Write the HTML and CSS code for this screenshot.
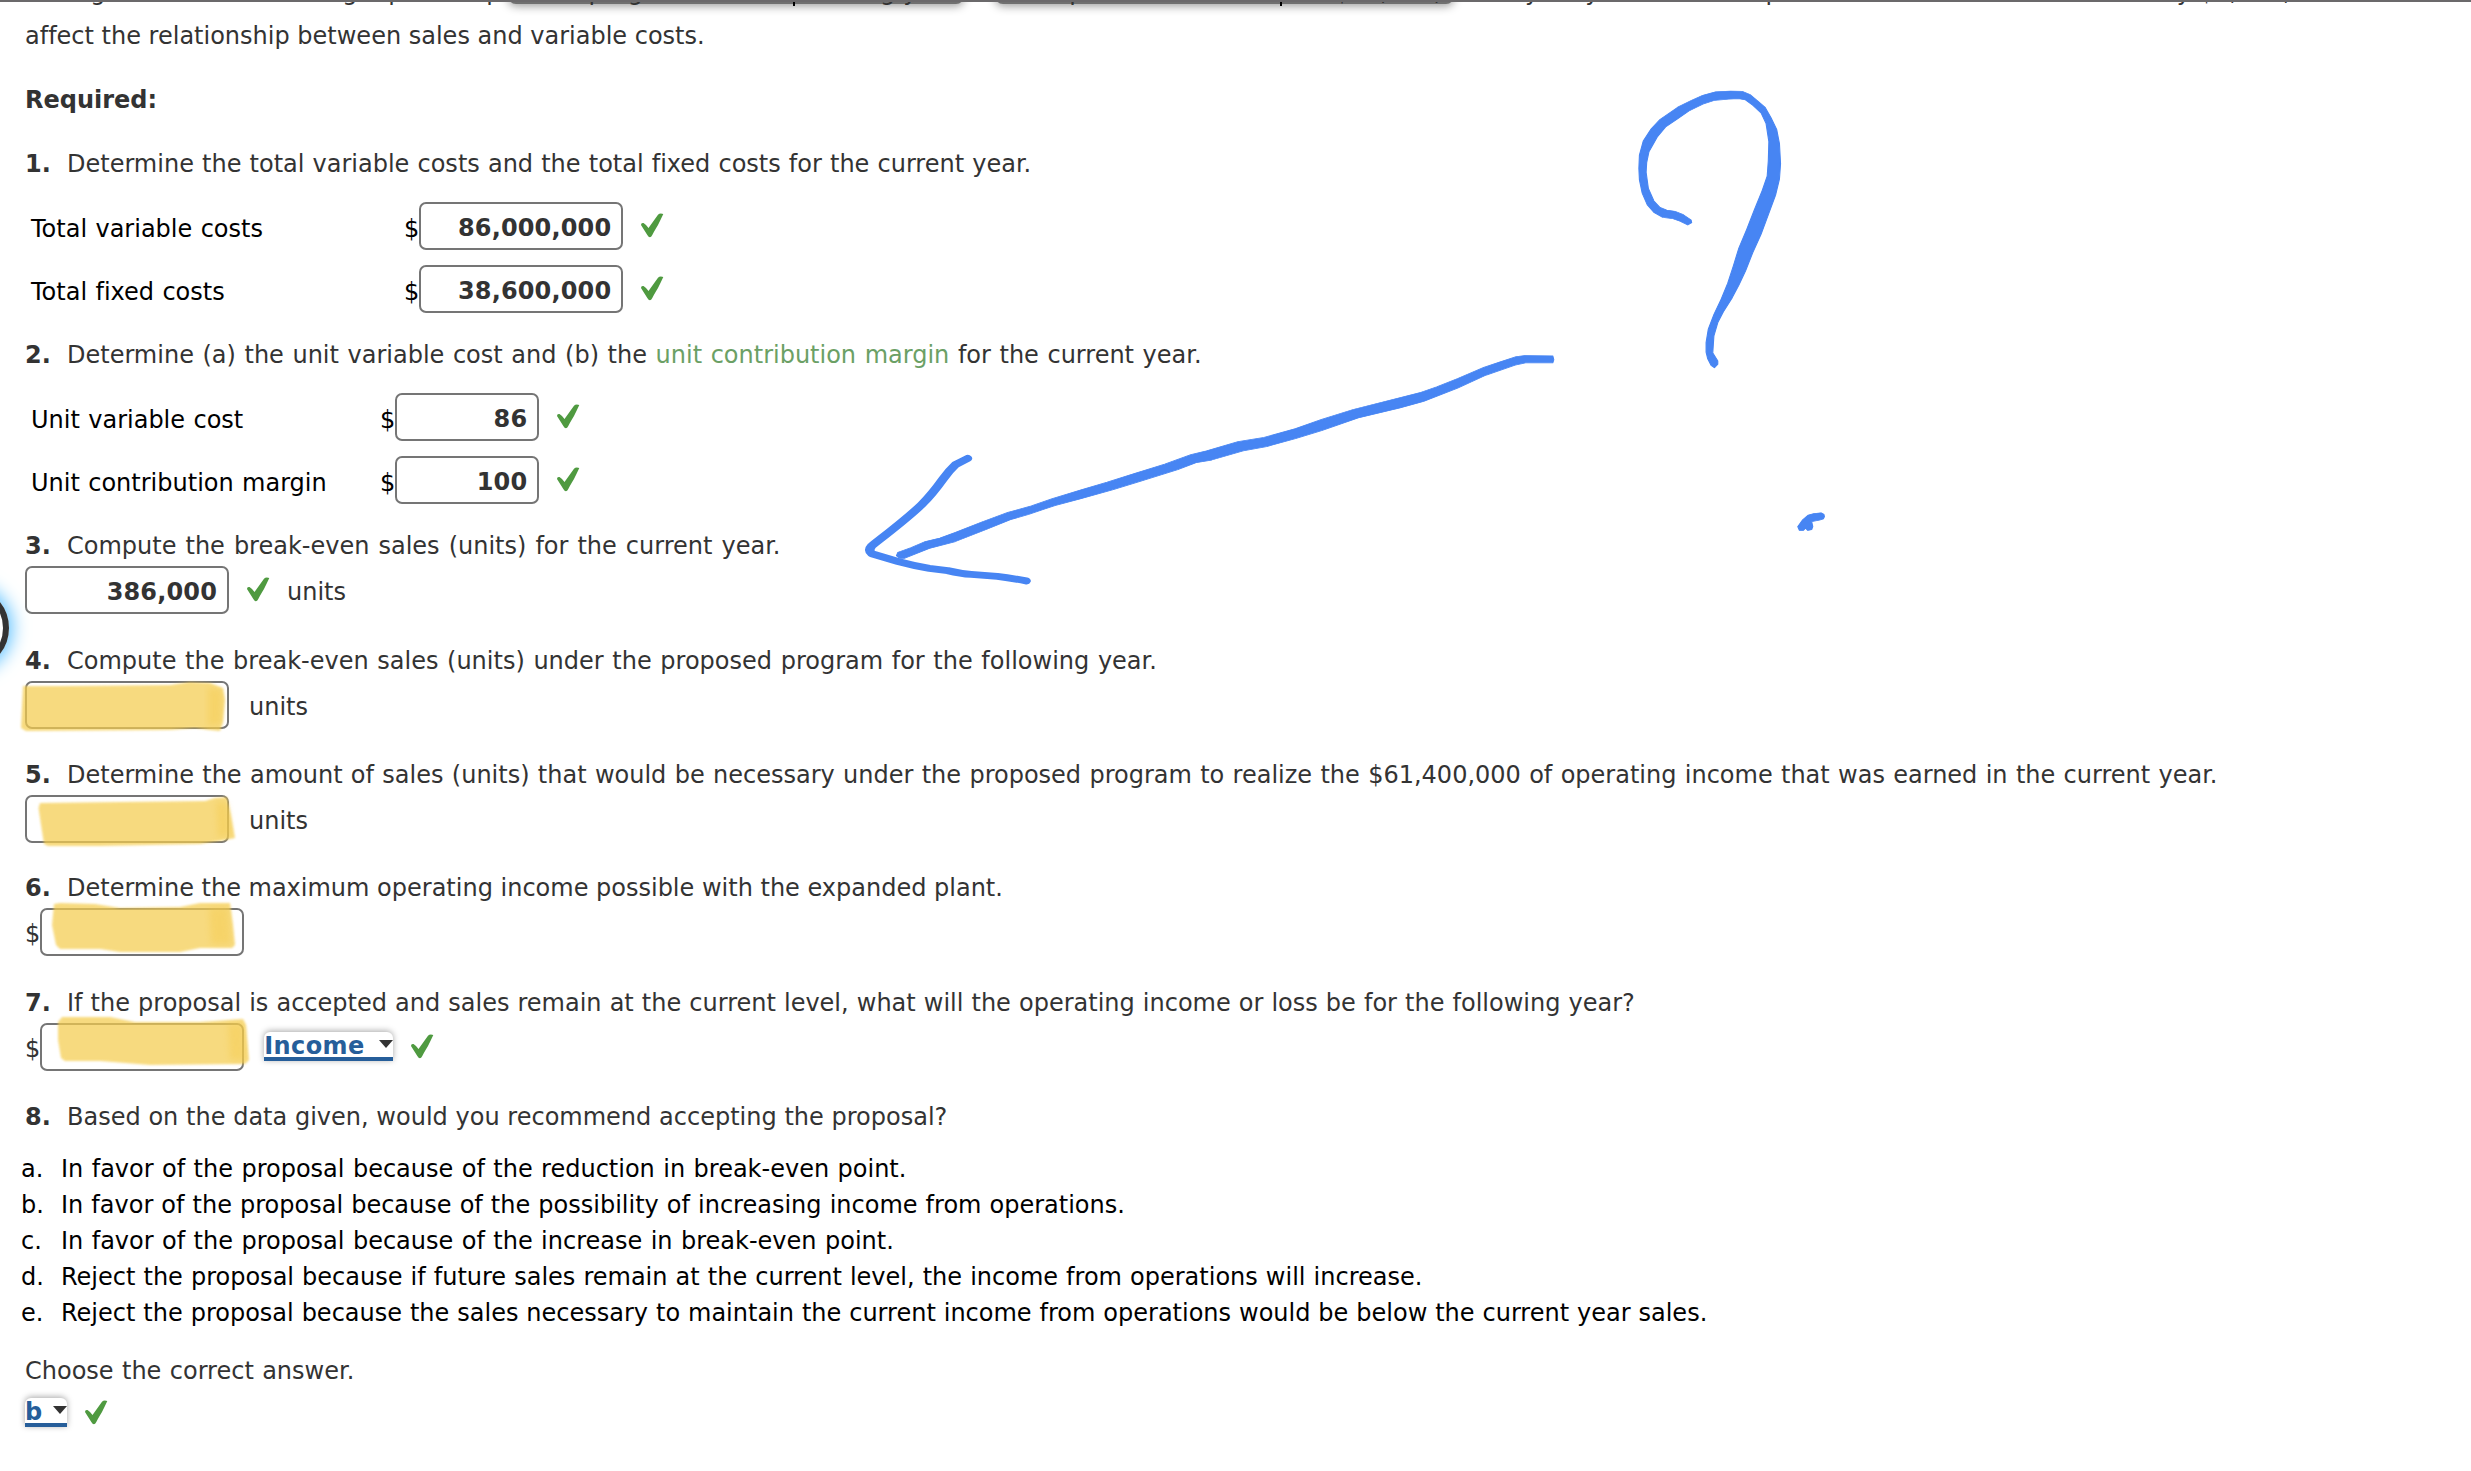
FILE: index.html
```html
<!DOCTYPE html>
<html lang="en">
<head>
  <meta charset="UTF-8">
  <title>Homework</title>
  <link rel="stylesheet" href="styles.css">
</head>
<body>
  <svg class="defs" width="0" height="0">
    <symbol id="check" viewBox="0 0 24 26">
      <path d="M1 12 Q1 9.500 3.500 10 Q6 11.300 8.500 15 L18 1.800 Q20 -0.500 23.300 1 Q20.500 7 18 12 Q14 18.500 12.300 22 Q10 26.500 7.300 22 Q4.500 17.500 1 12Z" fill="#4f9a40"/>
    </symbol>
  </svg>

  <!-- Toolbar edges along the top -->
  <div class="tab tab-left"></div>
  <div class="tab tab-right"></div>
  <div class="topline"></div>

  <main class="page">
    <p class="intro">Management is considering a plant expansion program for the following year that will permit an increase of $13,020,000 in yearly sales. The expansion will increase fixed costs by $5,000,000 but will not</p>
    <p class="intro-end">affect the relationship between sales and variable costs.</p>
    <p class="heading"><b>Required:</b></p>

    <p class="question first"><b>1.</b>Determine the total variable costs and the total fixed costs for the current year.</p>
    <div class="row wide"><span class="label">Total variable costs</span><span class="dollar">$</span><span class="box">86,000,000</span><svg class="check"><use href="#check"/></svg></div>
    <div class="row wide"><span class="label">Total fixed costs</span><span class="dollar">$</span><span class="box">38,600,000</span><svg class="check"><use href="#check"/></svg></div>

    <p class="question second"><b>2.</b>Determine (a) the unit variable cost and (b) the <a class="term">unit contribution margin</a> for the current year.</p>
    <div class="row"><span class="label">Unit variable cost</span><span class="dollar">$</span><span class="box small">86</span><svg class="check"><use href="#check"/></svg></div>
    <div class="row"><span class="label">Unit contribution margin</span><span class="dollar">$</span><span class="box small">100</span><svg class="check"><use href="#check"/></svg></div>

    <p class="question third"><b>3.</b>Compute the break-even sales (units) for the current year.</p>
    <div class="answer"><span class="box">386,000</span><svg class="check"><use href="#check"/></svg><span class="unit">units</span></div>

    <p class="question fourth"><b>4.</b>Compute the break-even sales (units) under the proposed program for the following year.</p>
    <div class="answer"><span class="box"></span><span class="unit">units</span></div>

    <p class="question fifth"><b>5.</b>Determine the amount of sales (units) that would be necessary under the proposed program to realize the $61,400,000 of operating income that was earned in the current year.</p>
    <div class="answer"><span class="box"></span><span class="unit">units</span></div>

    <p class="question sixth"><b>6.</b>Determine the maximum operating income possible with the expanded plant.</p>
    <div class="answer"><span class="dollar">$</span><span class="box"></span></div>

    <p class="question seventh"><b>7.</b>If the proposal is accepted and sales remain at the current level, what will the operating income or loss be for the following year?</p>
    <div class="answer"><span class="dollar">$</span><span class="box"></span><span class="select">Income<i class="arrow"></i></span><svg class="check"><use href="#check"/></svg></div>

    <p class="question eighth"><b>8.</b>Based on the data given, would you recommend accepting the proposal?</p>
    <ol class="choices">
      <li><span>a.</span>In favor of the proposal because of the reduction in break-even point.</li>
      <li><span>b.</span>In favor of the proposal because of the possibility of increasing income from operations.</li>
      <li><span>c.</span>In favor of the proposal because of the increase in break-even point.</li>
      <li><span>d.</span>Reject the proposal because if future sales remain at the current level, the income from operations will increase.</li>
      <li><span>e.</span>Reject the proposal because the sales necessary to maintain the current income from operations would be below the current year sales.</li>
    </ol>
    <p class="choose">Choose the correct answer.</p>
    <div class="final"><span class="select letter">b<i class="arrow"></i></span><svg class="check"><use href="#check"/></svg></div>
  </main>

  <div class="ring"></div>

  <!-- Highlighter and pen marks -->
  <svg class="marks" viewBox="0 0 2471 1471">
    <defs>
      <filter id="soft"><feGaussianBlur stdDeviation="1.2"/></filter>
      <filter id="softer"><feGaussianBlur stdDeviation="3"/></filter>
    </defs>
    <g class="marker" filter="url(#soft)">
      <path d="M23 686 L22 706 L21 728 L26 731 L100 730.500 L170 730 L195 728 L210 730 L220 731 L223 722 L225 700 L223 688 L210 683 L190 682 L170 685 L60 686Z"/>
      <path d="M40 803 L38.500 808 L41 825 L44 844 L48 846 L100 846 L200 844 L225 840 L235 838 L231 815 L227 797 L215 798 L205 801 L120 802Z"/>
      <path d="M54 904 L60 903 L95 904 L120 908 L180 907 L200 903 L230 903 L233 925 L235 945 L232 948 L200 948 L180 952 L120 952 L100 949 L60 949 L56 945 L52 925Z"/>
      <path d="M58 1022 L62 1017 L110 1017 L135 1022 L200 1022 L243 1019 L246 1025 L249 1060 L245 1064 L150 1065 L100 1061 L65 1061 L61 1058 L58 1040Z"/>
    </g>
    <g class="overlap" filter="url(#softer)">
      <path d="M208 687 L222 690 L221 724 L208 726Z"/>
      <path d="M216 802 L227 802 L231 834 L218 838Z"/>
      <path d="M209 908 L228 907 L231 944 L211 944Z"/>
      <path d="M228 1024 L243 1024 L245 1060 L230 1060Z"/>
    </g>
    <!-- arrow -->
    <g class="ink" transform="translate(830 0) scale(.523 .3827)">
      <path d="M1382 930 L1328 929 L1312 932 L1280 946 L1250 960 L1200 989 L1160 1011 L1130 1025 L1000 1070 L940 1096 L890 1120 L830 1143 L780 1154 L720 1178 L690 1188 L640 1213 L580 1238 L530 1260 L480 1280 L425 1303 L385 1322 L340 1339 L290 1364 L240 1391 L210 1406 L182 1415 L155 1431 L130 1443 L127 1452 L133 1459 L142 1459 L190 1433 L240 1415 L300 1383 L345 1358 L380 1344 L430 1321 L480 1303 L540 1280 L590 1259 L665 1227 L700 1209 L730 1202 L790 1178 L835 1167 L890 1146 L940 1125 L1010 1092 L1090 1066 L1135 1049 L1200 1014 L1255 980 L1310 954 L1330 948 L1382 948 L1384 940Z"/>
      <path class="line" d="M263 1198 L240 1214 Q228 1229 216 1252 Q195 1292 175 1319 C145 1358 105 1399 80 1426 Q72 1438 80 1447 Q102 1456 130 1467 Q160 1478 190 1485 L225 1491 Q250 1499 270 1501 L320 1506 Q345 1510 375 1518"/>
    </g>
    <!-- question mark -->
    <g class="ink" transform="translate(1600 0) scale(.5555 .3827)">
      <path d="M158 588 L144 578 L130 571 L113 568 L97 555 L85 535 L76 505 L71 470 L70 440 L71 405 L78 368 L92 337 L108 312 L140 280 L165 262 L185 249 L208 240 L235 238 L257 239 L270 247 L285 265 L297 280 L308 308 L318 338 L323 375 L325 428 L323 468 L316 510 L302 565 L290 612 L275 660 L262 708 L250 745 L238 778 L222 815 L212 843 L205 878 L203 922 L212 943 L212 952 L206 961 L200 955 L194 938 L191 920 L191 895 L195 860 L205 822 L218 782 L230 740 L240 695 L250 648 L264 600 L278 548 L292 498 L301 460 L303 420 L304 370 L299 323 L290 295 L275 275 L262 261 L250 258 L232 259 L207 262 L185 272 L160 290 L140 310 L118 332 L103 358 L88 397 L84 425 L83 450 L87 492 L97 525 L108 542 L120 549 L135 552 L150 561 L164 575 L165 582Z"/>
      <path d="M356 1376 L365 1358 L375 1346 L385 1342 L398 1340 L403 1344 L404 1350 L402 1356 L395 1359 L381 1363 L383 1376 L381 1384 L374 1386 L370 1380 L366 1386 L359 1386Z"/>
    </g>
  </svg>
</body>
</html>
```
FILE: styles.css
```css
* { box-sizing: border-box; }

body {
  margin: 0;
  width: 2471px;
  height: 1471px;
  overflow: hidden;
  position: relative;
  background: #fff;
  color: #333;
  font: 24px/32px Verdana, "DejaVu Sans", sans-serif;
  font-variant-ligatures: none;
  word-spacing: 0.75px;
}

p { margin: 0; white-space: nowrap; }

.defs { position: absolute; }

.page {
  display: flow-root;
  position: relative;
  padding-left: 25px;
}

/* Toolbar edges */
.topline {
  position: absolute;
  top: 0;
  left: 0;
  width: 100%;
  height: 2px;
  background: #6b696b;
  z-index: 2;
}

.tab {
  position: absolute;
  top: -20px;
  height: 24px;
  background: #707070;
  border-radius: 0 0 8px 8px;
  box-shadow: 0 2px 10px rgba(0,0,0,0.4);
}

.tab::after {
  content: "";
  position: absolute;
  top: 20px;
  left: 285px;
  width: 2px;
  height: 6px;
  background: #000;
}

.tab-left { left: 508px; width: 456px; }
.tab-right { left: 995px; width: 459px; }

/* Questions */
.intro { margin-top: -29px; line-height: 43px; word-spacing: 0.4px; }
.intro-end { height: 43px; line-height: 45px; word-spacing: 0; }
.heading { margin-top: 27px; }
.question { height: 32px; margin-top: 29.5px; line-height: 34px; white-space: pre; }
.question b { display: inline-block; width: 42px; }
.first { margin-top: 32px; margin-bottom: 22px; line-height: 33px; word-spacing: 0.5px; }
.second { margin: 26px 0 22px; line-height: 33px; word-spacing: 0.95px; }
.third { margin-top: 25px; word-spacing: 1.4px; }
.fourth { word-spacing: 1px; }
.fifth { word-spacing: 0.7px; }
.sixth { margin-top: 28px; word-spacing: 0; }
.seventh { word-spacing: 0.45px; }
.eighth { word-spacing: 0.1px; }
.term { color: #6ba065; }

/* Answer rows */
.row {
  display: flex;
  align-items: center;
  height: 48px;
  margin: 0 0 15px 6px;
  color: #000;
}

.label { width: 349px; padding-top: 5px; }
.wide .label { width: 373px; }
.dollar { padding-top: 5px; }
.answer { display: flex; align-items: center; height: 48px; margin-top: 5px; }
.answer .dollar { padding-top: 4px; }

.box {
  width: 204px;
  height: 48px;
  padding: 8px 10px;
  border: 2px solid #757575;
  border-radius: 7px;
  text-align: right;
  font-weight: bold;
  letter-spacing: 0.15px;
  color: #333;
}

.small { width: 144px; }
.check { width: 24px; height: 26px; margin-left: 17px; }
.unit { margin-left: 20px; padding-top: 4px; }
.check + .unit { margin-left: 17px; }

.select {
  display: flex;
  align-items: center;
  justify-content: space-between;
  width: 129px;
  height: 29px;
  margin-left: 20px;
  border-bottom: 4px solid #265e9a;
  border-radius: 6px 6px 0 0;
  box-shadow: 0 -1px 6px rgba(0,0,0,0.35);
  font-weight: bold;
  line-height: 25px;
  padding-top: 3px;
  letter-spacing: 0.4px;
  color: #265e9a;
}

.arrow {
  margin-bottom: 4px;
  border: 7px solid transparent;
  border-top: 8px solid #333;
  border-bottom: 0;
}

.letter { width: 42px; margin-left: 0; }

/* Choices */
.choices {
  list-style: none;
  margin: 19px 0 0 -4px;
  padding: 0;
  color: #000;
  line-height: 36px;
  word-spacing: 0.45px;
}

.choices li { display: flex; white-space: pre; }
.choices li:nth-child(odd) { word-spacing: 0.8px; }
.choices li:last-child { word-spacing: 0.3px; }
.choices span { width: 40px; }
.choose { margin-top: 24px; }
.final { display: flex; align-items: center; margin-top: 11px; }

/* Floating button cut off by the left edge */
.ring {
  position: absolute;
  left: -75px;
  top: 586px;
  width: 84px;
  height: 84px;
  border: 6px solid #333;
  border-radius: 50%;
  box-shadow: 0 0 18px 3px #5bc0ff;
}

.marks { position: absolute; top: 0; left: 0; width: 2471px; height: 1471px; }
.marker { fill: #f5cd50; opacity: 0.72; }
.overlap { fill: #f5c840; opacity: 0.35; }
.ink { fill: #4785f3; stroke: #4785f3; stroke-width: 2; stroke-linejoin: round; stroke-linecap: round; }
.ink .line { fill: none; stroke-width: 18; }
```
